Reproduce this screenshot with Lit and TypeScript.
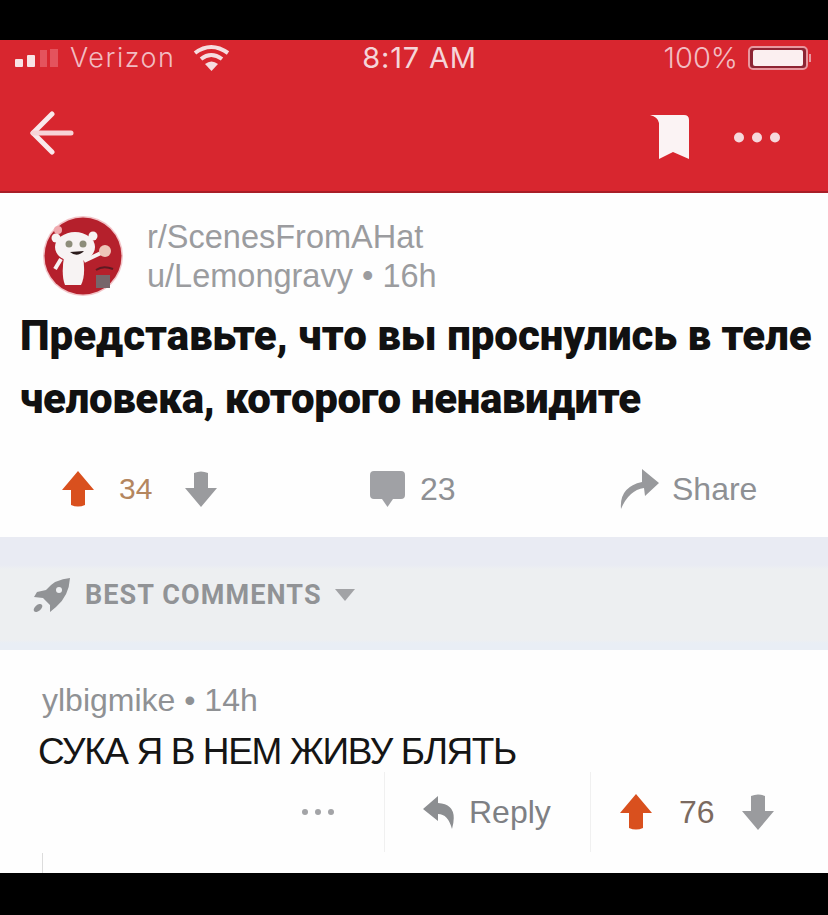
import { LitElement, html, css } from "lit";
import { customElement } from "lit/decorators.js";

const arrow = (cls: string, down = false) => html`<svg class="${cls}" viewBox="0 0 34 36" width="34" height="36"><path transform="${down ? "rotate(180 17 18)" : ""}" d="M17 0 L33 19 L24 19 L24 34 Q17 37 10 34 L10 19 L1 19 Z" /></svg>`;

@customElement("app-root")
export class AppRoot extends LitElement {
  static styles = css`
    :host { display: block; width: 828px; height: 915px; overflow: hidden; background: #000; font-family: "Liberation Sans", sans-serif; }
    .page { display: flex; flex-direction: column; height: 915px; }
    .bezel-top { height: 40px; flex: none; background: #000; }
    .bezel-bottom { height: 42px; flex: none; background: #000; }
    .header { height: 153px; flex: none; background: #d8262f; display: flex; flex-direction: column; border-bottom: 2px solid #a81e28; box-sizing: border-box; }
    .status { height: 38px; flex: none; box-sizing: border-box; display: grid; grid-template-columns: 1fr auto 1fr; align-items: center; padding: 0 16px 6px 15px; font-family: "Inter", sans-serif; font-weight: 300; font-size: 29px; color: #f2bcc2; }
    .status-left { display: flex; align-items: center; gap: 12px; }
    .status-left .wifi { margin-left: 6px; }
    .status-right { display: flex; align-items: center; justify-content: flex-end; gap: 10px; }
    .carrier { font-size: 27px; letter-spacing: 1.5px; }
    .time { font-weight: 400; color: #f5d5d9; margin-left: 12px; letter-spacing: .8px; }
    .nav { flex: 1; display: flex; align-items: center; justify-content: space-between; padding: 5px 48px 0 30px; }
    .back { margin-bottom: 8px; }
    .nav-right { display: flex; align-items: center; gap: 44px; }
    .post { height: 344px; flex: none; background: #fefefe; box-sizing: border-box; padding: 22px 0 0 20px; display: flex; flex-direction: column; }
    .meta { display: flex; align-items: center; gap: 24px; padding-left: 23px; }
    .avatar { flex: none; }
    .meta-text { color: #9b9c9f; font-size: 32.5px; line-height: 39px; padding-top: 1px; }
    .title { margin-top: 7px; font-family: "Roboto", sans-serif; font-weight: 900; font-size: 42px; line-height: 63px; color: #111; white-space: nowrap; }
    .tight { letter-spacing: -.35px; }
    .actions { display: grid; grid-template-columns: 309px 250px auto; align-items: center; margin-top: 39px; padding-left: 41px; color: #8e9094; font-size: 32px; }
    .act { display: flex; align-items: center; }
    .up { fill: #d9501e; flex: none; }
    .down { fill: #9a9b9e; flex: none; }
    .score { color: #b4865f; font-size: 30px; margin: 0 32px 0 24px; }
    .count { margin-left: 15px; }
    .share { margin-left: 13px; }
    .sort { height: 113px; flex: none; box-sizing: border-box; background: linear-gradient(#e9ebf3 0, #e9ebf3 28px, #edeff1 32px, #edeff1 103px, #e9eef5 106px); display: flex; align-items: center; padding: 3px 0 0 33px; color: #919396; font-weight: 700; font-size: 27px; letter-spacing: 1.1px; font-family: "Roboto", sans-serif; }
    .sort-label { margin-left: 15px; }
    .caret { margin-left: 13px; }
    .comment { flex: 1; background: #fefefe; box-sizing: border-box; padding: 30px 0 0 38px; display: flex; flex-direction: column; }
    .who { color: #8f9194; font-size: 32px; line-height: 40px; margin-left: 4px; }
    .body { font-size: 37px; line-height: 40px; color: #151515; margin-top: 12px; letter-spacing: -1.4px; white-space: nowrap; }
    .c-actions { display: flex; align-items: center; height: 80px; color: #7e8084; }
    .dots { display: flex; gap: 7px; width: 82px; margin-left: 264px; flex: none; }
    .dots i { width: 6px; height: 6px; border-radius: 50%; background: #a3a4a7; }
    .sep { width: 1px; height: 80px; background: #f0f0f0; flex: none; }
    .reply { display: flex; align-items: center; gap: 11px; font-size: 32px; width: 205px; padding-left: 38px; box-sizing: border-box; flex: none; }
    .votes { display: flex; align-items: center; padding-left: 28px; }
    .votes .score { color: #7b6a60; font-size: 32px; margin: 0 26px 0 26px; }
    .thread { width: 1px; height: 20px; margin: auto 0 0 4px; background: #dcdcdc; }
  `;

  render() {
    return html`<div class="page">
      <div class="bezel-top"></div>
      <header class="header">
        <div class="status">
          <div class="status-left">
            <svg width="43" height="18" viewBox="0 0 43 18">
              <rect x="0" y="10" width="8" height="8" rx="1" fill="#f8e3e5"/><rect x="12" y="6" width="8" height="12" rx="1" fill="#f8e3e5"/><rect x="25" y="1" width="7" height="17" fill="#e4535d"/><rect x="35" y="0" width="8" height="18" fill="#e4535d"/>
            </svg>
            <span class="carrier">Verizon</span>
            <svg class="wifi" width="37" height="27" viewBox="0 0 37 27" fill="none" stroke="#f6dde0" stroke-width="4"><path d="M2 9 Q18 -3 35 9"/><path d="M8 15 Q18 7 29 15"/><path d="M18.500 27 L12 20 Q18.500 15 25 20 Z" fill="#f6dde0" stroke="none"/></svg>
          </div>
          <span class="time">8:17 AM</span>
          <div class="status-right">
            <span>100%</span>
            <svg width="64" height="24" viewBox="0 0 64 24"><rect x="1" y="1" width="58" height="22" rx="4" fill="#8d2433" stroke="#e8979f" stroke-width="2"/><rect x="5" y="4" width="50" height="16" rx="2" fill="#fbeff0"/><rect x="61" y="8" width="2" height="8" fill="#e8979f"/></svg>
          </div>
        </div>
        <div class="nav">
          <svg class="back" width="44" height="44" viewBox="0 0 44 44" fill="none" stroke="#f9e9eb" stroke-width="5" stroke-linecap="round" stroke-linejoin="round"><path d="M22 3 L3 22 L22 41"/><path d="M3 22 H41" stroke="#f7d3d7"/></svg>
          <div class="nav-right">
            <svg width="40" height="46" viewBox="0 0 40 46"><path d="M0 1 H34 Q39 1 39 6 V45 L23 38 L9 45 V9 Q8 3 0 1 Z" fill="#fbf3f4"/></svg>
            <svg width="46" height="11" viewBox="0 0 46 11" fill="#f6d8dc"><circle cx="5" cy="5.500" r="5"/><circle cx="23" cy="5.500" r="5"/><circle cx="41" cy="5.500" r="5"/></svg>
          </div>
        </div>
      </header>
      <section class="post">
        <div class="meta">
          <svg class="avatar" width="80" height="82" viewBox="0 0 80 82">
            <circle cx="40" cy="41" r="40" fill="#f2c4c8"/>
            <circle cx="40" cy="41" r="38.500" fill="#b5202c"/>
            <circle cx="15" cy="15" r="4" fill="#f0a9ae"/>
            <path d="M21 42 Q30 37 40 42 Q43 60 38 70 L22 70 Q18 60 21 42 Z" fill="#f7f3f3"/>
            <ellipse cx="32" cy="32" rx="20" ry="15" fill="#f7f3f3"/>
            <circle cx="13" cy="23" r="4.500" fill="#f7f3f3"/><circle cx="50" cy="21" r="4.500" fill="#f7f3f3"/>
            <circle cx="26" cy="29" r="3.500" fill="#8d8d7a"/><circle cx="40" cy="29" r="3.500" fill="#8d8d7a"/>
            <path d="M27 37 Q34 43 41 36 Z" fill="#2a1a1a"/>
            <path d="M41 46 L58 38" stroke="#f7f3f3" stroke-width="4"/><circle cx="62" cy="36" r="6" fill="#eec5b8"/>
            <path d="M18 44 L12 54" stroke="#f7f3f3" stroke-width="4"/>
            <path d="M53 55 Q60 50 70 54" stroke="#5e1a22" stroke-width="2" fill="none"/>
            <rect x="53" y="60" width="14" height="13" fill="#77656a"/>
          </svg>
          <div class="meta-text"><div>r/ScenesFromAHat</div><div>u/Lemongravy • 16h</div></div>
        </div>
        <div class="title">Представьте, что вы проснулись в теле<br><span class="tight">человека, которого ненавидите</span></div>
        <div class="actions">
          <div class="act">${arrow("up")}<span class="score">34</span>${arrow("down", true)}</div>
          <div class="act">
            <svg width="35" height="36" viewBox="0 0 35 36" style="flex:none"><path d="M4 0 H31 Q35 0 35 4 V24 Q35 28 31 28 H23 L17.500 36 L12 28 H4 Q0 28 0 24 V4 Q0 0 4 0 Z" fill="#a0a1a5"/></svg>
            <span class="count">23</span>
          </div>
          <div class="act">
            <svg width="39" height="40" viewBox="0 0 39 40" style="flex:none"><path d="M1 40 Q-1 18 22 13 L22 0 L39 14 L25 27 L24 19 Q9 21 1 40 Z" fill="#98999c"/></svg>
            <span class="share">Share</span>
          </div>
        </div>
      </section>
      <section class="sort">
        <svg width="37" height="35" viewBox="0 0 37 35"><path d="M37 0 Q22 1 13 12 L4 14 L1 19 L10 20 L17 27 L17 34 L23 29 Q36 18 37 0 Z" fill="#919396"/><circle cx="26" cy="12" r="3" fill="#eef0f2"/><ellipse cx="5" cy="30" rx="5" ry="3" transform="rotate(-40 5 30)" fill="#919396"/></svg>
        <span class="sort-label">BEST COMMENTS</span>
        <svg class="caret" width="20" height="12" viewBox="0 0 20 12"><path d="M0 0 H20 L10 12 Z" fill="#a2a3a6"/></svg>
      </section>
      <section class="comment">
        <div class="who">ylbigmike • 14h</div>
        <div class="body">СУКА Я В НЕМ ЖИВУ БЛЯТЬ</div>
        <div class="c-actions">
          <div class="dots"><i></i><i></i><i></i></div>
          <div class="sep"></div>
          <div class="reply">
            <svg width="35" height="33" viewBox="0 0 35 33"><path d="M0 13 L15 0 L15 7 Q36 8 29 33 Q25 18 15 18 L15 25 Z" fill="#8c8e91"/></svg>
            <span>Reply</span>
          </div>
          <div class="sep"></div>
          <div class="votes">${arrow("up")}<span class="score">76</span>${arrow("down", true)}</div>
        </div>
        <div class="thread"></div>
      </section>
      <div class="bezel-bottom"></div>
    </div>`;
  }
}
